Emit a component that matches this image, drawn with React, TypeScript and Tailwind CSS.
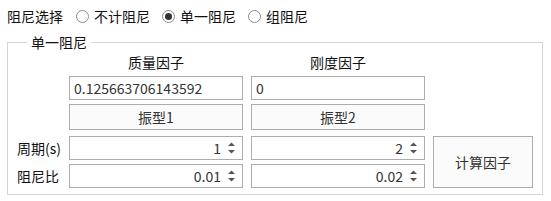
import React from 'react';

const font = { fontFamily: '"Noto Sans CJK SC", "Noto Sans", sans-serif' };

function Radio({ label, checked }: { label: string; checked?: boolean }) {
  return (
    <label className="flex items-center gap-[5px] mr-[12px]">
      <span className="w-[13px] h-[13px] rounded-full border border-[#8c8c8c] bg-white flex items-center justify-center">
        {checked && <span className="w-[7px] h-[7px] rounded-full bg-[#333]" />}
      </span>
      <span>{label}</span>
    </label>
  );
}

function Spin({ value }: { value: string }) {
  return (
    <div className="h-[24px] border border-[#adadad] bg-white flex items-center justify-end pr-[6px]">
      <span className="text-[#333] mr-[6px]">{value}</span>
      <svg width="9" height="14" viewBox="0 0 9 14">
        <path d="M4.5 1.5 L8 5 L1 5 Z" fill="#555" />
        <path d="M1 9 L8 9 L4.5 12.5 Z" fill="#555" />
      </svg>
    </div>
  );
}

export default function App() {
  return (
    <div className="w-[551px] h-[201px] bg-white text-[14px] leading-5 text-[#111]" style={font}>
      {/* radio selection row */}
      <div className="h-[32px] flex items-center pl-[7px]">
        <span className="mr-[13px]">阻尼选择</span>
        <Radio label="不计阻尼" />
        <Radio label="单一阻尼" checked />
        <Radio label="组阻尼" />
      </div>

      <fieldset className="ml-[7px] w-[536px] border border-[#d5d5d5] pl-[9px] pb-[6px] m-0">
        <legend className="ml-[10px] px-[4px] leading-5">单一阻尼</legend>
        <div className="grid grid-cols-[44px_174px_174px_100px] gap-x-2">
          {/* header labels */}
          <div />
          <div className="h-[20px] text-center">质量因子</div>
          <div className="h-[20px] text-center">刚度因子</div>
          <div />

          {/* factor inputs */}
          <div />
          <div className="mt-[4px] h-[24px] border border-[#adadad] bg-white flex items-center pl-[4px] text-[#333]">
            0.125663706143592
          </div>
          <div className="mt-[4px] h-[24px] border border-[#adadad] bg-white flex items-center pl-[4px] text-[#333]">
            0
          </div>
          <div />

          {/* mode buttons */}
          <div />
          <div className="mt-[4px] h-[26px] border border-[#adadad] bg-[#fbfbfb] flex items-center justify-center text-[#333]">
            振型1
          </div>
          <div className="mt-[4px] h-[26px] border border-[#adadad] bg-[#fbfbfb] flex items-center justify-center text-[#333]">
            振型2
          </div>
          <div />

          {/* period / damping ratio */}
          <div className="mt-[6px] h-[24px] flex items-center whitespace-nowrap">周期(s)</div>
          <div className="mt-[6px]">
            <Spin value="1" />
          </div>
          <div className="mt-[6px]">
            <Spin value="2" />
          </div>
          <div className="mt-[6px] row-span-2 border border-[#adadad] bg-[#fbfbfb] flex items-center justify-center text-[#333]">
            计算因子
          </div>

          <div className="mt-[4px] h-[24px] flex items-center whitespace-nowrap">阻尼比</div>
          <div className="mt-[4px]">
            <Spin value="0.01" />
          </div>
          <div className="mt-[4px]">
            <Spin value="0.02" />
          </div>
        </div>
      </fieldset>
    </div>
  );
}
